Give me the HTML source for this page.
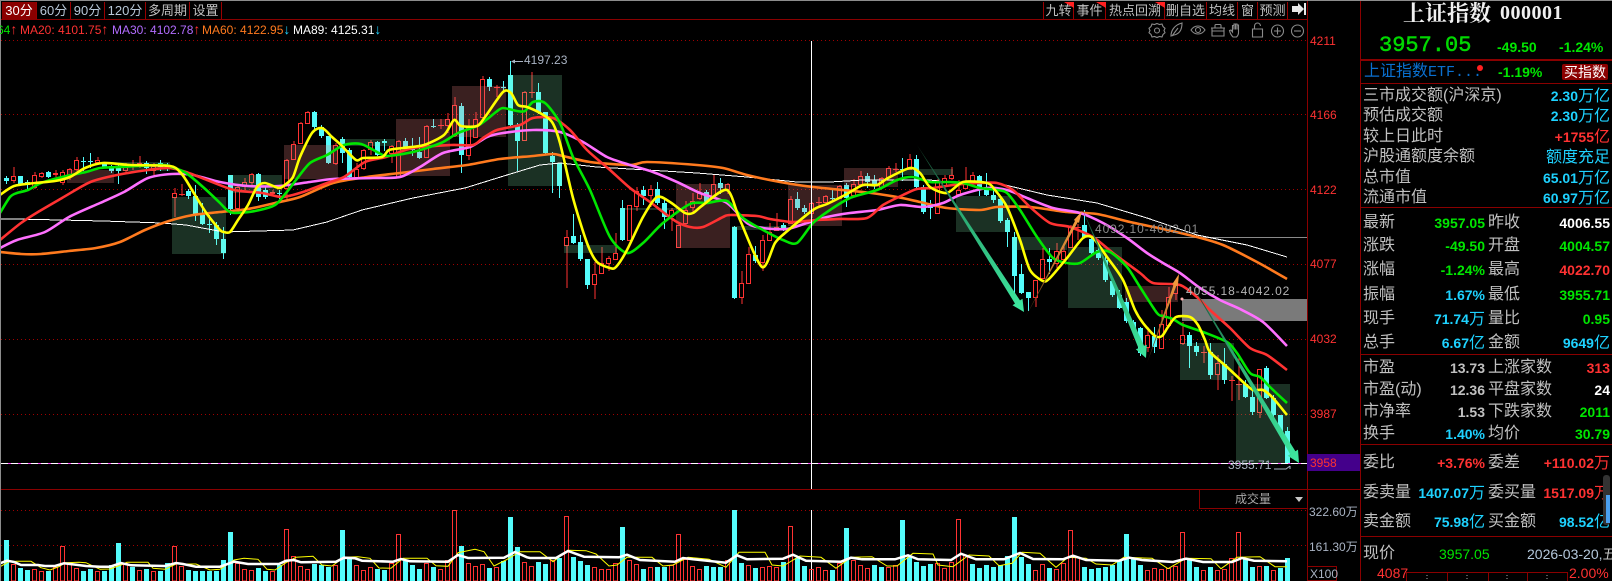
<!DOCTYPE html>
<html><head><meta charset="utf-8"><title>上证指数</title>
<style>
html,body{margin:0;padding:0;background:#000;width:1612px;height:581px;overflow:hidden}
#r{position:relative;width:1612px;height:581px;overflow:hidden;background:#000;font-family:"Liberation Sans","WenQuanYi Zen Hei","Noto Sans CJK SC",sans-serif;color:#c0c0c0}
#r div,#r span.a{position:absolute;white-space:nowrap}
svg{position:absolute;left:0;top:0}
.tab{top:2px;height:17px;line-height:17px;font-size:13px;text-align:center;border-right:1px solid #990000;box-sizing:border-box}
.ma{top:22px;font-size:12px;line-height:16px}
.ma b{font-weight:normal;font-size:14px;line-height:12px}
.ax{left:1310px;font-size:12px;line-height:14px;color:#ff3232}
.l{font-size:16px;line-height:20px;height:20px;color:#c0c0c0;left:1363px}
.l2{font-size:16px;line-height:20px;height:20px;color:#c0c0c0;left:1488px}
.v{font-size:14px;font-weight:bold;line-height:20px;height:20px;text-align:right;right:127px}
.v2{font-size:14px;font-weight:bold;line-height:20px;height:20px;text-align:right;right:2px}
.v i,.v2 i{font-style:normal;font-weight:normal;font-size:16px}
.c{color:#1ed2ff}.g{color:#00e600}.d{color:#ff3232}.w{color:#fff}.s{color:#c0c0c0}
.hl{left:1361px;width:251px;height:1px;background:#8a0000}
</style></head><body><div id="r">
<svg id="chart" width="1612" height="581" xmlns="http://www.w3.org/2000/svg"></svg>

<div style="left:0;top:0;width:1612px;height:1px;background:#8c8c8c"></div>
<div style="left:0;top:0;width:1px;height:581px;background:#8c8c8c"></div>

<div class="tab" style="left:2px;width:35px;background:#8b0000;color:#fff">30分</div>
<div class="tab" style="left:37px;width:34px;color:#b8c8d8">60分</div>
<div class="tab" style="left:71px;width:34px;color:#b8c8d8">90分</div>
<div class="tab" style="left:105px;width:41px;color:#b8c8d8">120分</div>
<div class="tab" style="left:146px;width:44px">多周期</div>
<div class="tab" style="left:190px;width:32px">设置</div>

<div class="tab" style="left:1043px;width:31px;border-left:1px solid #990000">九转</div>
<div class="tab" style="left:1074px;width:32px">事件</div>
<div class="tab" style="left:1106px;width:59px">热点回溯</div>
<div class="tab" style="left:1165px;width:42px">删自选</div>
<div class="tab" style="left:1207px;width:31px">均线</div>
<div class="tab" style="left:1238px;width:20px">窗</div>
<div class="tab" style="left:1258px;width:30px">预测</div>

<div class="ma g" style="left:-3px">64<b class="d">↑</b></div>
<div class="ma d" style="left:20px">MA20: 4101.75<b>↑</b></div>
<div class="ma" style="left:112px;color:#b26cff">MA30: 4102.78<b class="d">↑</b></div>
<div class="ma" style="left:202px;color:#ff7a1e">MA60: 4122.95<b class="c">↓</b></div>
<div class="ma" style="left:293px;color:#fff">MA89: 4125.31<b class="c">↓</b></div>

<div class="ax" style="top:34px">4211</div>
<div class="ax" style="top:108px">4166</div>
<div class="ax" style="top:183px">4122</div>
<div class="ax" style="top:257px">4077</div>
<div class="ax" style="top:332px">4032</div>
<div class="ax" style="top:407px">3987</div>
<div style="left:1307px;top:454px;width:53px;height:17px;background:#44008b"></div>
<div class="ax" style="top:456px">3958</div>

<div style="left:524px;top:53px;font-size:12px;line-height:14px;color:#aab4c4">4197.23</div>
<div style="left:1095px;top:222px;font-size:12px;line-height:14px;letter-spacing:.9px;color:#8c8c8c">4092.10-4092.01</div>
<div style="left:1186px;top:284px;font-size:12px;line-height:14px;letter-spacing:.9px;color:#b4b4b4">4055.18-4042.02</div>
<div style="left:1228px;top:458px;font-size:12px;line-height:14px;color:#aab4c4">3955.71</div>

<div style="left:1199px;top:489px;width:107px;height:19px;border-left:1px solid #8a0000;border-bottom:1px solid #8a0000"></div>
<div style="left:1235px;top:490px;font-size:12px;line-height:18px;color:#a8a8a8">成交量</div>
<div style="left:1295px;top:497px;width:0;height:0;border-left:4px solid transparent;border-right:4px solid transparent;border-top:5px solid #c8c8c8"></div>

<div style="left:1309px;top:505px;font-size:12px;line-height:14px;color:#aab4c4">322.60万</div>
<div style="left:1309px;top:540px;font-size:12px;line-height:14px;color:#aab4c4">161.30万</div>
<div style="left:1307px;top:566px;width:30px;height:15px;box-sizing:border-box;border:1px solid #8a0000;font-size:12px;line-height:14px;color:#aab4c4;padding-left:2px">X100</div>

<div style="left:1403px;top:0;font-family:'Liberation Serif','Noto Serif CJK SC',serif;font-weight:bold;font-size:22px;line-height:27px;color:#f0f0f0">上证指数</div>
<div style="left:1500px;top:0;font-family:'Liberation Serif',serif;font-weight:bold;font-size:20px;line-height:27px;letter-spacing:.5px;color:#f0f0f0">000001</div>
<div style="left:1379px;top:32px;font-family:'Liberation Mono',monospace;font-size:22px;line-height:28px;-webkit-text-stroke:.5px #00d800;color:#00d800">3957.05</div>
<div class="g" style="left:1497px;top:37px;font-size:14px;font-weight:bold;line-height:20px">-49.50</div>
<div class="g" style="left:1559px;top:37px;font-size:14px;font-weight:bold;line-height:20px">-1.24%</div>
<div style="left:1361px;top:59px;width:251px;height:2px;background:#8a0000"></div>

<div style="left:1364px;top:62px;font-size:16px;line-height:20px;color:#0a70d0">上证指数<span style="font-family:'Liberation Mono',monospace;font-size:15px">ETF...</span></div>
<div style="left:1477px;top:65px;width:6px;height:6px;border-radius:50%;background:#ff2020"></div>
<div class="g" style="left:1498px;top:62px;font-size:14px;font-weight:bold;line-height:20px">-1.19%</div>
<div style="left:1562px;top:64px;width:46px;height:16px;background:#8b0000;border-radius:2px;color:#fff;font-size:14px;line-height:16px;text-align:center">买指数</div>
<div class="hl" style="top:83px"></div>

<div class="l" style="top:86px">三市成交额(沪深京)</div><div class="v2 c" style="top:86px">2.30<i>万亿</i></div>
<div class="l" style="top:106px">预估成交额</div><div class="v2 c" style="top:106px">2.30<i>万亿</i></div>
<div class="l" style="top:127px">较上日此时</div><div class="v2 d" style="top:127px">+1755<i>亿</i></div>
<div class="l" style="top:147px">沪股通额度余额</div><div class="v2 c" style="top:147px"><i>额度充足</i></div>
<div class="l" style="top:168px">总市值</div><div class="v2 c" style="top:168px">65.01<i>万亿</i></div>
<div class="l" style="top:188px">流通市值</div><div class="v2 c" style="top:188px">60.97<i>万亿</i></div>
<div class="hl" style="top:207px"></div>

<div class="l" style="top:213px">最新</div><div class="v g" style="top:213px">3957.05</div><div class="l2" style="top:213px">昨收</div><div class="v2 w" style="top:213px">4006.55</div>
<div class="l" style="top:236px">涨跌</div><div class="v g" style="top:236px">-49.50</div><div class="l2" style="top:236px">开盘</div><div class="v2 g" style="top:236px">4004.57</div>
<div class="l" style="top:260px">涨幅</div><div class="v g" style="top:260px">-1.24%</div><div class="l2" style="top:260px">最高</div><div class="v2 d" style="top:260px">4022.70</div>
<div class="l" style="top:285px">振幅</div><div class="v c" style="top:285px">1.67%</div><div class="l2" style="top:285px">最低</div><div class="v2 g" style="top:285px">3955.71</div>
<div class="l" style="top:309px">现手</div><div class="v c" style="top:309px">71.74<i>万</i></div><div class="l2" style="top:309px">量比</div><div class="v2 g" style="top:309px">0.95</div>
<div class="l" style="top:333px">总手</div><div class="v c" style="top:333px">6.67<i>亿</i></div><div class="l2" style="top:333px">金额</div><div class="v2 c" style="top:333px">9649<i>亿</i></div>
<div class="hl" style="top:354px"></div>

<div class="l" style="top:358px">市盈</div><div class="v s" style="top:358px">13.73</div><div class="l2" style="top:358px">上涨家数</div><div class="v2 d" style="top:358px">313</div>
<div class="l" style="top:380px">市盈(动)</div><div class="v s" style="top:380px">12.36</div><div class="l2" style="top:380px">平盘家数</div><div class="v2 w" style="top:380px">24</div>
<div class="l" style="top:402px">市净率</div><div class="v s" style="top:402px">1.53</div><div class="l2" style="top:402px">下跌家数</div><div class="v2 g" style="top:402px">2011</div>
<div class="l" style="top:424px">换手</div><div class="v c" style="top:424px">1.40%</div><div class="l2" style="top:424px">均价</div><div class="v2 g" style="top:424px">30.79</div>
<div class="hl" style="top:444px"></div>

<div class="l" style="top:453px">委比</div><div class="v d" style="top:453px">+3.76%</div><div class="l2" style="top:453px">委差</div><div class="v2 d" style="top:453px">+110.02<i>万</i></div>
<div class="l" style="top:483px">委卖量</div><div class="v c" style="top:483px">1407.07<i>万</i></div><div class="l2" style="top:483px">委买量</div><div class="v2 d" style="top:483px">1517.09<i>万</i></div>
<div class="l" style="top:512px">卖金额</div><div class="v c" style="top:512px">75.98<i>亿</i></div><div class="l2" style="top:512px">买金额</div><div class="v2 c" style="top:512px">98.52<i>亿</i></div>
<div class="hl" style="top:536px"></div>
<div style="left:1603px;top:475px;width:7px;height:50px;background:#333;border-radius:3px"></div>
<div style="left:1606px;top:495px;width:4px;height:28px;background:#4aa0f0"></div>

<div class="l" style="top:544px">现价</div>
<div class="g" style="left:1439px;top:544px;font-size:14px;line-height:20px">3957.05</div>
<div style="left:1527px;top:544px;font-size:14px;line-height:20px;color:#b4c8dc">2026-03-20,<span style="color:#c0c0c0">五</span></div>
<div class="d" style="left:1377px;top:565px;font-size:14px;line-height:16px">4087</div>
<div class="d" style="left:1569px;top:565px;font-size:14px;line-height:16px">2.00%</div>

<svg width="1612" height="581" style="pointer-events:none" xmlns="http://www.w3.org/2000/svg">
<path d="M1406.5 581V572.5H1567.5V581M1447.5 572.5V581M1488.5 572.5V581M1527.5 572.5V581" fill="none" stroke="#8a0000"/>
<path d="M1427 575v1M1427 578v1M1467 575v1M1467 578v1M1507 575v1M1507 578v1M1547 575v1M1547 578v1" stroke="#aaa"/>
<path d="M1064 2L1074 2L1074 8Z M1096 2L1106 2L1106 8Z M1155 2L1165 2L1165 8Z" fill="#ff2020"/>
<path d="M1292 6h6v-3l6 6-6 6v-3h-6z" fill="#e8e8e8"/><rect x="1304" y="3" width="2" height="12" fill="#e8e8e8"/>
<g fill="none" stroke="#8a8a8a" stroke-width="1.1">
<path d="M1157 24.500l2.500 1 2.500-.5 1 2.500 2 1.800-1 2.200 1 2.200-2 1.800-1 2.500-2.500-.5-2.500 1-2.500-1-2.500.5-1-2.500-2-1.800 1-2.200-1-2.200 2-1.800 1-2.500 2.500.5z" transform="translate(0,-1)"/><circle cx="1157" cy="30.500" r="2.500"/>
<path d="M1171 36c0-5 3-11 11-13 0 7-3 11-8 12l-3 1zm1 0l6-8"/>
<path d="M1191 30c2-3 4-4 7-4s5 1 7 4c-2 3-4 4-7 4s-5-1-7-4z"/><circle cx="1198" cy="30" r="2.500"/>
<path d="M1212 28h12v8h-12zM1211 28h14M1215 28v-2.500a1 1 0 0 1 1-1h4a1 1 0 0 1 1 1V28M1212 31h12"/>
<path d="M1233 37c-2-2-3-4-3.500-6.500l1.500-.5 1.500 2V25.500h1.500v4V24h1.500v5.500V24h1.500v5.500V25h1.500v7l0 1c0 2-1 3-2 4z"/>
<path d="M1252.500 29h10v8h-10zM1254.500 29v-3a3 3 0 0 1 6 0"/>
<circle cx="1277.500" cy="31" r="6"/><path d="M1274 31h7M1277.500 27.500v7"/>
<circle cx="1297.500" cy="31" r="6"/><path d="M1294 31h7"/>
</g>
<path d="M1290 466l-4 3h-12M1290 466v3" fill="none" stroke="#aab4c4"/>
<path d="M523 61.500H513" stroke="#aab4c4"/><path d="M511 61.500l4-2v4z" fill="#aab4c4"/>
</svg>
</div>
<script>
(function(){
var C="c178,181,176,183 r176,180,167,183 c176,184,176,185 c182,185,180,190 r175,187,172,189 r173,176,172,178 c172,177,171,177 r173,174,170,177 r172,182,170,185 r169,175,168,180 r160,169,157,171 c161,161,157,170 c161,161,153,167 r160,162,157,165 c163,167,163,167 c166,171,165,172 c168,171,163,183 r167,170,163,172 r166,166,160,170 r163,165,156,168 c163,168,161,173 r166,170,163,175 c163,167,160,170 c166,167,163,170 r193,197,188,217 r194,194,184,196 c191,196,189,198 c196,215,185,220 c215,224,203,224 c224,224,215,232 c225,239,222,244 c239,253,227,258 c175,209,175,214 r187,208,185,208 r182,186,178,190 r174,182,173,187 c174,197,173,200 c190,197,187,198 r192,193,190,196 c193,194,190,198 r160,188,159,200 r144,159,141,160 r123,143,122,144 r112,123,111,124 c112,127,111,131 c127,136,125,137 c136,163,136,163 r145,163,143,165 c139,153,137,162 c150,177,148,178 r169,177,163,178 r150,168,149,170 r142,149,140,155 c142,155,141,155 c141,143,139,150 r146,153,145,163 r141,177,140,177 c141,147,138,150 c147,150,138,155 c152,158,137,158 r126,157,125,157 c126,127,119,127 r125,125,119,129 r119,125,113,133 r105,135,97,137 c106,155,103,172 r128,155,119,160 r119,137,112,137 r79,117,76,118 c79,87,77,90 r87,87,85,97 c87,87,81,92 c75,125,61,125 c125,141,123,170 r92,140,91,141 r92,92,72,98 c92,112,83,113 c112,153,112,153 c156,162,152,192 c163,186,163,197 r237,245,230,288 c236,243,214,243 c242,259,235,260 c259,285,259,288 r274,284,262,299 r263,273,247,274 r258,263,256,271 r253,259,233,259 c208,240,200,240 r205,240,205,240 r191,206,187,211 c190,196,186,204 r189,195,185,207 c189,203,182,204 c203,217,198,228 r210,216,208,231 r225,247,222,247 r210,223,201,225 r201,207,193,213 r193,198,183,200 c192,202,190,203 r184,196,175,197 c183,188,178,193 r184,189,183,194 c227,298,226,298 r283,297,271,304 r254,283,247,284 c255,261,246,262 r240,262,235,271 r232,240,223,241 r227,230,213,230 c225,229,223,230 r199,223,196,223 c199,208,192,209 c208,212,205,213 r203,213,202,218 r202,202,197,206 r196,202,195,203 c198,198,189,199 r186,198,185,199 c185,198,183,206 r184,195,179,197 r176,184,171,185 c176,182,173,187 c180,186,175,188 r178,187,177,188 r168,177,166,177 r169,169,163,172 c169,169,158,180 r159,169,154,170 c159,187,155,188 c187,212,185,213 c207,207,200,218 r180,213,179,213 r178,185,175,190 r175,178,167,180 r190,194,180,195 r182,188,167,189 r175,182,172,183 c176,187,175,195 c187,195,173,195 c195,200,188,202 c199,221,197,222 c220,232,218,246 c237,276,232,297 c274,293,264,293 c292,298,292,310 r280,297,280,307 r259,278,248,278 c259,262,248,273 r251,263,243,268 r251,259,243,260 r227,247,225,248 r227,227,224,240 c225,237,210,237 c239,253,237,254 c250,258,240,259 c260,280,253,281 c281,295,280,296 c295,308,290,308 c302,321,298,322 c322,330,320,331 c328,353,327,355 r335,347,327,352 c336,347,327,352 r324,348,310,348 r297,325,287,325 r285,293,285,300 r335,343,322,345 c335,346,332,367 c346,352,342,355 r352,352,346,363 c352,375,343,378 r363,374,355,390 c364,380,348,383 r380,380,376,401 r384,384,357,400 c384,397,380,397 c397,412,390,414 r369,412,369,418 c368,398,366,398 c398,415,395,416 c415,432,415,433 c431,463,427,463".split(" ");
var cy="",rd="",rw="";
C.forEach(function(s,i){
 var k=s[0],a=s.slice(1).split(",").map(Number),x=7*i+6.5,t=a[0],b=a[1],wt=a[2],wb=a[3];
 if(k=="c"){cy+="M"+(x-2.5)+" "+t+"h5v"+Math.max(b-t,1)+"h-5z";}
 else{
  if(t==b){rw+="M"+x+" "+wt+"V"+wb+"M"+(x-3)+" "+(t+.5)+"h6";}
  else{rw+="M"+x+" "+wt+"V"+t+"M"+x+" "+b+"V"+wb;rd+="M"+(x-2)+" "+(t+.5)+"h4v"+(b-t)+"h-4z";}
 }
});
var V="c210 r282 c294 c300 r298 r304 c302 r290 r228 r278 r294 c303 c297 r304 c303 c285 c219 r280 c290 r300 c297 r303 c303 c279 r228 r288 c300 c303 c302 c303 c302 c270 c186 r280 r298 r300 c294 c303 r304 c285 r178 r259 r289 r298 c283 c286 c290 r285 c180 c262 r286 r301 r292 c297 c299 r280 r192 c272 c285 c297 r278 c291 r298 r270 r121 c228 r280 r288 r283 c294 r291 c273 c141 c231 r277 r288 c276 c282 r270 c265 r139 c261 c273 c285 r292 r297 r297 r280 c171 r270 r282 c297 r292 c291 c291 r285 r192 r268 r288 r297 c288 c292 c292 r270 c120 c280 r286 c294 r291 r288 r292 c276 r168 c265 c288 r297 r291 r300 c300 r280 c174 r270 r285 r293 c285 c291 r291 r285 c150 c262 c276 c288 c282 r280 r294 r277 r148 r256 c283 c294 c286 c291 c285 c259 c141 c261 c282 r300 r283 c294 r297 r280 r181 r262 c291 c297 c294 c291 c285 c270 c192 c268 c285 r300 r294 r297 r294 r288 r186 c270 c291 r300 c291 r300 r297 r265 r186 c268 c291 r288 c288 r300 c294 c264".split(" ");
var vc="",vr="";
V.forEach(function(s,i){var y=Math.round(470+Number(s.slice(1))/3),x=7*i+4;
 if(s[0]=="c")vc+="M"+x+" "+y+"h5V581h-5z";else vr+="M"+(x+.5)+" "+(y+.5)+"h4V581h-4z";});
function poly(a){var s="";for(var i=0;i<a.length;i+=2)s+=(i?"L":"M")+a[i]+" "+a[i+1];return s;}
function smooth(a){var n=a.length/2,s="M"+a[0]+" "+a[1],t=.8/6;function P(i){i=Math.max(0,Math.min(n-1,i));return[a[2*i],a[2*i+1]];}
 for(var i=0;i<n-1;i++){var p0=P(i-1),p1=P(i),p2=P(i+1),p3=P(i+2);
  s+="C"+(p1[0]+(p2[0]-p0[0])*t).toFixed(1)+" "+(p1[1]+(p2[1]-p0[1])*t).toFixed(1)+" "+(p2[0]-(p3[0]-p1[0])*t).toFixed(1)+" "+(p2[1]-(p3[1]-p1[1])*t).toFixed(1)+" "+p2[0]+" "+p2[1];}
 return s;}
var Y=[0,195,14,186,35,183,55,181,70,177,85,168,103,163,130,165,170,166,180,172,186,180,195,195,207,214,220,230,224,232,230,232,238,220,248,205,257,187,265,183,279,188,286,184,293,177,300,157,312,133,322,128,332,137,341,145,356,160,363,158,382,157,389,150,403,148,424,145,444,135,454,120,461,126,477,126,485,117,503,92,511,93,518,105,527,107,540,113,552,122,560,143,573,198,587,243,597,262,610,268,616,267,627,250,643,217,657,197,670,202,685,213,693,213,703,205,727,190,740,220,762,267,775,243,785,233,813,210,827,204,845,195,863,185,877,185,888,178,910,168,920,173,930,187,947,193,963,182,987,183,995,190,1007,207,1020,240,1030,270,1043,281,1050,278,1067,258,1083,238,1093,238,1107,257,1123,280,1135,310,1143,323,1155,336,1162,336,1168,327,1176,317,1190,317,1198,325,1205,340,1210,352,1227,367,1243,382,1253,390,1263,390,1273,398,1287,415];
var G=[0,213,10,197,17,193,28,190,41,183,62,177,86,172,100,168,119,167,162,165,172,167,186,173,203,187,220,203,227,210,234,213,255,211,275,205,286,193,296,180,310,163,327,155,344,145,361,144,379,153,387,156,413,152,441,143,458,133,479,125,496,112,503,108,517,111,525,111,533,102,545,103,560,123,573,157,590,190,610,237,627,253,643,243,663,223,690,204,707,203,727,201,743,218,763,230,783,240,797,243,813,223,830,210,850,198,877,190,897,180,913,177,930,182,947,182,963,183,980,188,997,190,1007,193,1020,210,1037,237,1053,258,1067,263,1080,263,1097,252,1110,252,1127,267,1140,287,1157,313,1163,316,1173,319,1183,325,1203,332,1227,342,1237,353,1250,373,1260,377,1270,387,1287,403];
var R=[0,240,21,223,38,212,62,198,79,188,93,181,117,175,148,170,169,168,186,172,207,180,234,190,262,193,282,197,303,192,327,183,344,177,365,162,386,157,413,148,451,145,473,145,483,138,497,130,520,125,533,118,553,118,570,130,587,150,610,170,630,188,650,202,663,212,677,222,690,227,703,227,723,217,730,215,757,216,770,219,793,222,817,220,840,219,867,218,883,205,903,195,917,189,933,188,953,185,980,183,997,183,1013,190,1030,207,1050,223,1070,227,1093,237,1113,253,1140,273,1153,283,1180,285,1197,297,1210,310,1230,328,1250,348,1267,355,1287,370];
var P=[0,248,17,240,45,232,69,217,100,203,124,192,148,178,172,174,193,175,220,182,248,186,279,186,310,182,333,179,373,178,400,177,420,167,443,153,470,147,487,137,503,133,533,130,560,132,583,142,607,157,630,165,653,172,677,182,700,193,727,203,747,223,763,228,787,229,807,223,827,217,850,213,877,210,900,205,923,207,943,203,960,195,987,188,1007,190,1027,198,1053,208,1080,213,1103,223,1127,238,1147,253,1163,263,1180,273,1200,288,1220,300,1240,309,1263,322,1287,346];
var O=[0,252,21,254,41,254,69,251,96,248,120,242,145,230,169,221,193,215,220,212,248,209,275,203,300,197,333,183,367,177,400,173,433,169,467,165,500,159,533,156,553,154,563,156,590,162,630,165,647,162,697,165,723,168,747,175,780,182,813,187,863,192,897,197,920,202,947,208,980,210,997,207,1030,207,1067,212,1097,214,1130,222,1163,229,1197,237,1223,245,1257,262,1287,279];
var W=[0,219,17,219,103,221,162,223,186,225,224,232,293,230,327,222,362,210,413,198,465,188,507,175,540,165,560,163,597,167,647,170,697,173,747,177,797,182,830,182,863,180,930,180,947,182,997,183,1047,195,1097,203,1147,218,1197,235,1247,245,1287,257];
function conv(a,sx,ox){var o=[];for(var i=0;i<a.length;i+=2){o.push(Math.round(ox+a[i]/sx),+(470+a[i+1]/3).toFixed(1));}return o;}
var VW=conv([0,280,20,272,40,276,60,285,110,285,130,288,160,288,185,280,210,283,250,288,290,290,320,290,350,279,380,286,480,288,510,279,530,282,570,290,640,290,680,275,720,282,810,282,830,272,855,270,875,277,975,275,1000,263,1030,265,1050,272,1140,275,1165,267,1190,274,1300,275,1330,255,1360,264,1465,263,1495,246,1530,262],2.904,0).concat(conv([0,264,50,264,75,243,105,260,175,262,190,254,215,270,285,275,300,264,320,268,385,278,405,256,425,268,495,266,515,254,540,272,610,275,630,263,650,268,715,268,740,256,760,268,825,270,845,251,875,268,930,268,960,249,985,267,1045,268,1065,257,1090,270,1155,272,1175,263,1200,270,1260,276,1285,266,1320,276,1375,276,1395,264,1420,272,1483,274],1.96,530));
var VY=conv([0,290,25,275,50,274,90,274,120,293,145,300,170,290,190,278,230,277,250,278,290,298,320,297,350,285,370,277,430,277,445,295,480,298,510,282,570,282,610,300,640,298,680,270,710,265,750,268,775,298,800,300,830,278,860,262,910,259,935,285,965,288,1000,262,1040,260,1075,265,1100,294,1135,295,1170,265,1240,265,1265,287,1300,289,1330,248,1380,238,1405,245,1435,288,1470,270,1510,245],2.904,0).concat(conv([20,245,45,275,75,241,110,242,130,252,155,288,170,285,190,262,240,262,260,288,280,285,310,262,350,268,385,292,410,247,460,247,475,285,495,288,530,258,570,262,600,295,630,262,670,260,700,288,720,288,750,250,790,252,800,285,830,290,860,255,900,258,920,287,945,280,965,247,1000,250,1030,292,1055,262,1090,265,1110,282,1140,285,1165,262,1220,265,1250,296,1285,265,1335,266,1355,296,1385,262,1430,260,1460,290,1483,290],1.96,530));
var boxesG=[[508,75,54,111],[115,162,55,9],[340,139,55,7],[229,175,53,18],[172,197,54,57],[564,245,53,8],[620,208,57,2],[732,226,55,4],[898,169,55,6],[956,196,54,36],[1013,237,54,13],[1068,247,54,61],[1180,343,54,37],[1236,384,54,79]];
var boxesR=[[67,170,47,13],[284,145,54,34],[396,119,54,57],[452,86,54,51],[676,184,54,64],[788,185,54,41],[844,168,54,19],[1125,286,53,16]];
var s="";
var grid="";[40.5,114.5,189.5,264.5,339.5,414.5,510.5,545.5].forEach(function(y){grid+="M1 "+y+"H1307";});
s+='<path d="'+grid+'" stroke="#a00000" stroke-dasharray="1 3" fill="none"/>';
s+='<path d="M1307.5 0V581M1360.5 0V581M0 19.5H1307M0 489.5H1360" stroke="#8a0000" fill="none"/>';
s+='<path d="'+cy+'" fill="#54fcfc" shape-rendering="crispEdges"/>';
var cw="";C.forEach(function(t,i){if(t[0]=="c"){var a=t.slice(1).split(",").map(Number);var x=7*i+6;cw+="M"+x+" "+a[2]+"h1V"+(a[3]+1)+"h-1z";var y=a[0];if(a[0]==a[1]){cw+="M"+(x-2)+" "+y+"h5v1h-5z";}}});
s+='<path d="'+cw+'" fill="#54fcfc" shape-rendering="crispEdges"/>';
s+='<path d="'+rw+'" stroke="#ff3232" fill="none" transform="translate(.5 0)" shape-rendering="crispEdges"/>';
s+='<path d="'+rd+'" stroke="#ff3232" fill="none" shape-rendering="crispEdges"/>';
boxesG.forEach(function(b){s+='<rect x="'+b[0]+'" y="'+b[1]+'" width="'+b[2]+'" height="'+b[3]+'" fill="rgb(135,245,180)" fill-opacity=".2"/>';});
boxesR.forEach(function(b){s+='<rect x="'+b[0]+'" y="'+b[1]+'" width="'+b[2]+'" height="'+b[3]+'" fill="rgb(232,128,128)" fill-opacity=".25"/>';});
s+='<rect x="1182" y="299" width="125" height="22" fill="#7a7a7a"/>';
s+='<path d="M1093 237.500H1307" stroke="#8a8a8a"/>';
s+='<circle cx="1182" cy="299" r="1.500" fill="#ffb0b0"/>';
s+='<path d="'+poly(W)+'" fill="none" stroke="#fff" stroke-width="1" shape-rendering="crispEdges"/>';
s+='<path d="'+smooth(O)+'" fill="none" stroke="#ff7a1e" stroke-width="2.6"/>';
s+='<path d="'+smooth(P)+'" fill="none" stroke="#ff70ff" stroke-width="2.6"/>';
s+='<path d="'+smooth(R)+'" fill="none" stroke="#ff3232" stroke-width="2.6"/>';
s+='<path d="'+smooth(G)+'" fill="none" stroke="#00e600" stroke-width="2.6"/>';
s+='<path d="'+smooth(Y)+'" fill="none" stroke="#ffff00" stroke-width="2.6"/>';
var gs='<stop offset="0" stop-color="#123a26"/><stop offset=".4" stop-color="#2aa870"/><stop offset="1" stop-color="#3ee8a0"/>',os='<stop offset="0" stop-color="#2a1a08"/><stop offset=".5" stop-color="#c07a30"/><stop offset="1" stop-color="#ffa040"/>';
s+='<defs><linearGradient id="ag1" gradientUnits="userSpaceOnUse" x1="917" y1="145" x2="1024" y2="310">'+gs+'</linearGradient><linearGradient id="ag2" gradientUnits="userSpaceOnUse" x1="1082" y1="208" x2="1145" y2="357">'+gs+'</linearGradient><linearGradient id="ag3" gradientUnits="userSpaceOnUse" x1="1187" y1="277" x2="1298" y2="462">'+gs+'</linearGradient><linearGradient id="ao1" gradientUnits="userSpaceOnUse" x1="1025" y1="318" x2="1082" y2="212">'+os+'</linearGradient><linearGradient id="ao2" gradientUnits="userSpaceOnUse" x1="1147" y1="363" x2="1179" y2="274">'+os+'</linearGradient></defs>';
s+='<path d="M917 145L1020 300.400L1022.500 298.800L1024 312L1012.500 305.200L1015 303.600Z" fill="url(#ag1)"/>';
s+='<path d="M1082 208L1144 345.800L1146.800 344.700L1146 358L1135.800 349.300L1138.500 348.200Z" fill="url(#ag2)"/>';
s+='<path d="M1187 277L1295.400 451.200L1298 449.600L1299 463L1287.700 455.800L1290.200 454.300Z" fill="url(#ag3)"/>';
s+='<path d="M1025 318L1075.100 220.800L1073.800 220.100L1082 211L1079 222.900L1077.700 222.200Z" fill="url(#ao1)"/>';
s+='<path d="M1147 363L1173.600 284.800L1172.200 284.300L1179 274L1177.800 286.300L1176.400 285.800Z" fill="url(#ao2)"/>';
s+='<path d="M811.500 41V489M811.500 510V581" stroke="#fff" fill="none"/>';
s+='<path d="M1 463.500H1307" stroke="#ff40ff"/><path d="M1 463.500H1307" stroke="#fff" stroke-dasharray="7 3"/>';
s+='<path d="'+vc+'" fill="#54fcfc" shape-rendering="crispEdges"/>';
s+='<path d="'+vr+'" fill="none" stroke="#ff3232" shape-rendering="crispEdges"/>';
s+='<path d="'+poly(VY)+'" fill="none" stroke="#ffff00" stroke-width="1"/>';
s+='<path d="'+poly(VW)+'" fill="none" stroke="#fff" stroke-width="2.500"/>';
document.getElementById("chart").innerHTML=s;
})();
</script>
</body></html>
